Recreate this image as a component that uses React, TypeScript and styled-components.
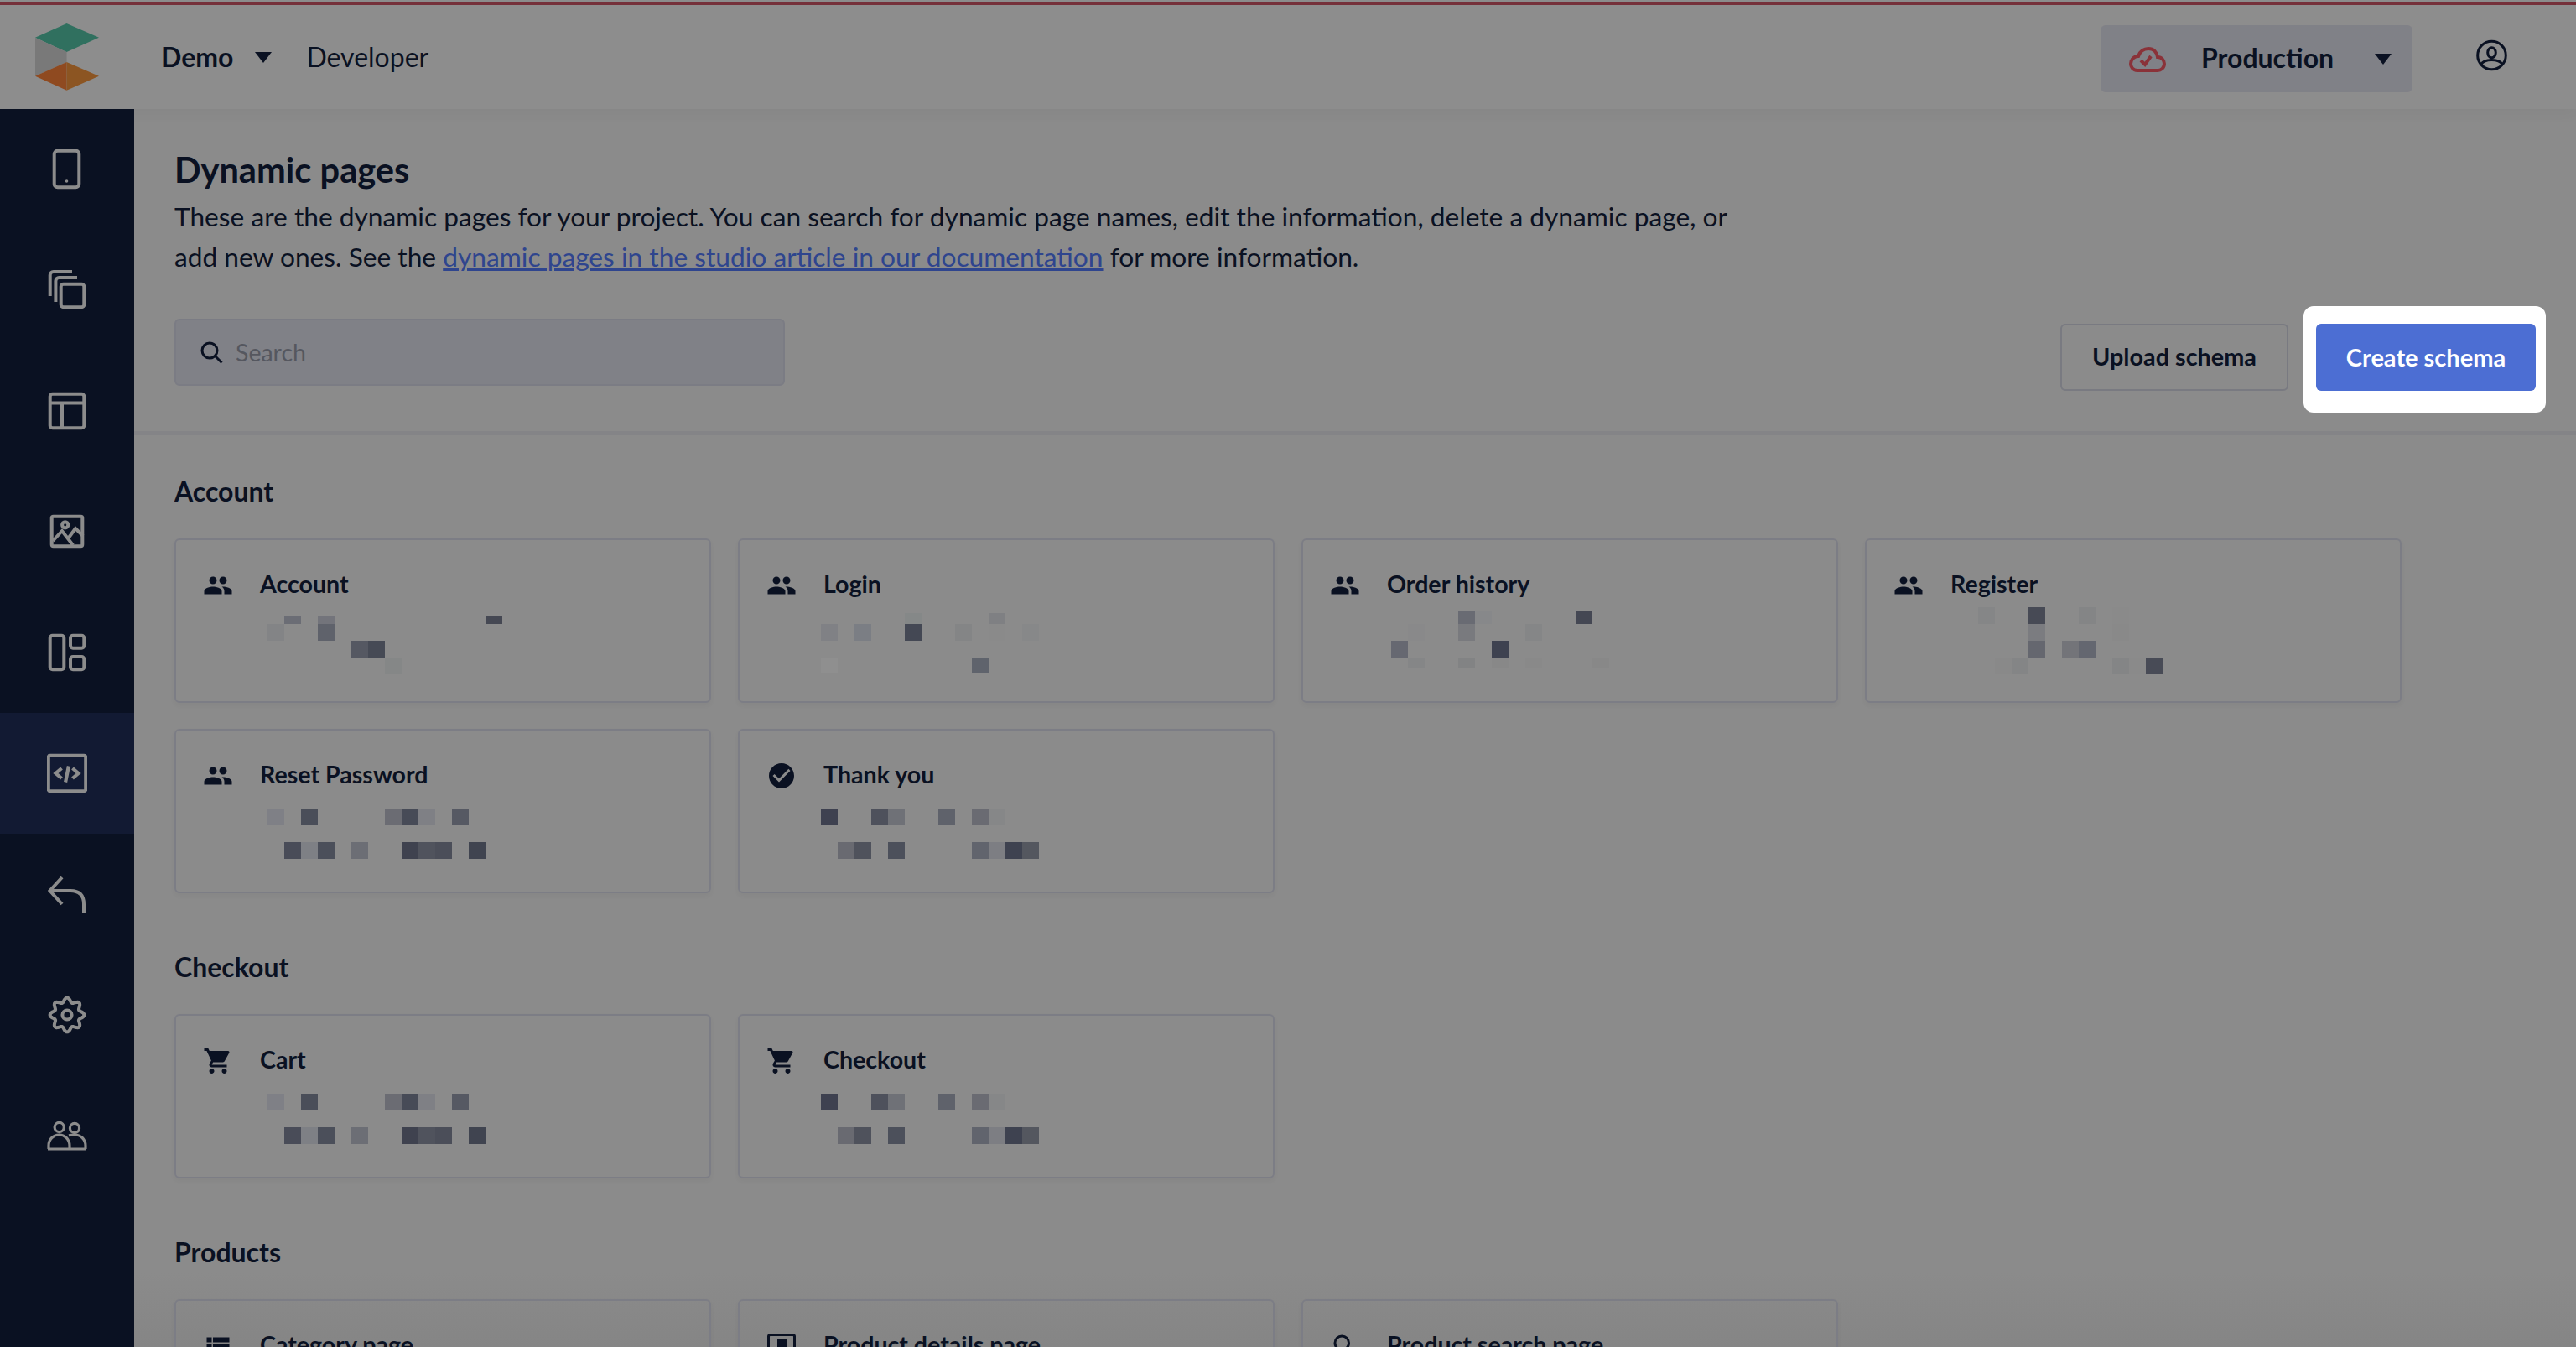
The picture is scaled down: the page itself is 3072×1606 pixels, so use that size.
import React from "react";
import styled, { createGlobalStyle } from "styled-components";
import { MdPeople, MdShoppingCart, MdCheckCircle, MdViewList, MdSearch } from "react-icons/md";

const INK = "#0a1122";
const ICON = "#8c8c8c";

const Global = createGlobalStyle`
  html, body { margin: 0; padding: 0; background: #8b8b8b; }
  * { box-sizing: border-box; }
  body { font-family: Lato, "Open Sans", sans-serif; color: ${INK}; }
`;

const Root = styled.div`
  width: 3072px;
  height: 1606px;
  overflow: hidden;
  display: flex;
  flex-direction: column;
`;
const TopBar = styled.header`
  position: relative;
  z-index: 1;
  flex: 0 0 130px;
  display: flex;
  align-items: center;
  background: linear-gradient(#8c8c8c 0 2px, #75303a 2px 6px, #8d8d8d 6px);
  box-shadow: 0 6px 16px rgba(0, 0, 0, 0.035);
  padding: 6px 82px 0 42px;
`;
const Logo = styled.svg`
  width: 76px;
  height: 80px;
  flex: none;
`;
const Project = styled.span`
  margin: -2px 0 0 74px;
  font-size: 32px;
  font-weight: 700;
`;
const Caret = styled.svg<{ $left: number }>`
  width: 20px;
  height: 13px;
  flex: none;
  margin-left: ${(p) => p.$left}px;
`;
const Role = styled.span`
  margin: -2px 0 0 41px;
  font-size: 32px;
`;
const EnvSelect = styled.div`
  margin: 4px 0 0 auto;
  width: 372px;
  height: 80px;
  border-radius: 6px;
  background: #808187;
  display: flex;
  align-items: center;
  padding-left: 34px;
`;
const EnvName = styled.span`
  margin: -3px 0 0 42px;
  font-size: 32px;
  font-weight: 700;
`;
const CloudIcon = styled.svg`
  width: 44px;
  height: 30px;
  flex: none;
  margin-top: 2px;
`;
const UserIcon = styled.svg`
  width: 37px;
  height: 38px;
  flex: none;
  margin: -5px 0 0 76px;
`;
const Body = styled.div`
  flex: 1;
  display: flex;
  min-height: 0;
`;
const Side = styled.nav`
  position: relative;
  z-index: 2;
  flex: 0 0 160px;
  background: #0a1122;
  display: flex;
  flex-direction: column;
`;
const SideItem = styled.div<{ $active?: boolean }>`
  height: 144px;
  display: flex;
  align-items: center;
  justify-content: center;
  background: ${(p) => (p.$active ? "#121a33" : "transparent")};
`;
const SideIcon = styled.svg`
  width: 48px;
  height: 48px;
  fill: none;
  stroke: ${ICON};
  stroke-width: 4;
`;
const Main = styled.main`
  flex: 1;
  min-width: 0;
  background: linear-gradient(#8b8b8b calc(100% - 90px), #858585);
`;
const Intro = styled.section`
  padding: 48px 48px 0 48px;
  height: 389px;
  border-bottom: 5px solid #848487;
`;
const Title = styled.h1`
  margin: 0;
  font-size: 41.6px;
  line-height: 48px;
  font-weight: 700;
`;
const Lead = styled.p`
  margin: 8px 0 0;
  width: 1870px;
  font-size: 31.7px;
  line-height: 48px;
`;
const DocLink = styled.a`
  color: #2f458e;
  text-decoration: underline;
`;
const Toolbar = styled.div`
  margin-top: 50px;
  display: flex;
  align-items: flex-start;
`;
const SearchBox = styled.div`
  width: 728px;
  height: 80px;
  border: 2px solid #7b7c84;
  border-radius: 6px;
  background: #808187;
  display: flex;
  align-items: center;
  padding: 0 0 0 29px;
  font-size: 28.5px;
  color: #55575f;
`;
const SearchGlyph = styled.svg`
  width: 27px;
  height: 27px;
  fill: none;
  stroke: ${INK};
  stroke-width: 3;
  margin-right: 15px;
  flex: none;
`;
const Actions = styled.div`
  margin: 6px 0 0 auto;
  display: flex;
  gap: 33px;
`;
const GhostButton = styled.div`
  width: 272px;
  height: 80px;
  border: 2px solid #797a81;
  border-radius: 6px;
  display: flex;
  align-items: center;
  justify-content: center;
  padding-bottom: 2px;
  font-size: 28.8px;
  font-weight: 700;
`;
const Spotlight = styled.div`
  position: relative;
  &::before {
    content: "";
    position: absolute;
    left: -15px;
    right: -12px;
    top: -21px;
    bottom: -26px;
    background: #fff;
    border-radius: 12px;
  }
`;
const PrimaryButton = styled.div`
  position: relative;
  width: 262px;
  height: 80px;
  border-radius: 6px;
  background: #4c6ed3;
  color: #fff;
  display: flex;
  align-items: center;
  justify-content: center;
  padding-bottom: 2px;
  font-size: 29px;
  font-weight: 700;
`;
const Section = styled.section`
  padding: 47px 0 0 48px;
  & + & {
    padding-top: 68px;
  }
`;
const SectionTitle = styled.h2`
  margin: 0 0 36px;
  font-size: 32px;
  line-height: 40px;
  font-weight: 700;
`;
const CardGrid = styled.div`
  display: grid;
  grid-template-columns: repeat(4, 640px);
  column-gap: 32px;
  row-gap: 31px;
`;
const Card = styled.article`
  height: 196px;
  border: 2px solid #7c7d85;
  border-radius: 6px;
  box-shadow: 0 3px 6px rgba(0, 0, 0, 0.04);
  padding: 32px 0 0 32px;
`;
const CardHead = styled.div`
  display: flex;
  align-items: center;
  height: 40px;
  font-size: 28.6px;
  font-weight: 700;
  svg {
    flex: none;
    margin: 4px 32px 0 0;
    color: ${INK};
  }
`;
const Mosaic = styled.svg`
  display: block;
  width: 360px;
  height: 100px;
  margin-left: 68px;
  overflow: visible;
`;

type Cell = [number, number, number, string];
const resetCells: Cell[] = [
  [0, 1, 1, "#7f8086"], [2, 1, 1, "#4a4e59"], [7, 1, 1, "#6b6c73"], [8, 1, 1, "#474b57"], [9, 1, 1, "#7f8085"], [11, 1, 1, "#565963"],
  [1, 3, 1, "#494c58"], [2, 3, 1, "#7e8085"], [3, 3, 1, "#4b4f5a"], [5, 3, 1, "#6c6e75"], [8, 3, 1, "#3f424f"], [9, 3, 1, "#50535d"], [10, 3, 1, "#4b4e59"], [12, 3, 1, "#404450"],
];
const thanksCells: Cell[] = [
  [0, 1, 1, "#3e4150"], [3, 1, 1, "#4e515c"], [4, 1, 1, "#6f7177"], [7, 1, 1, "#5f626b"], [9, 1, 1, "#6a6b72"], [10, 1, 1, "#868788"],
  [1, 3, 1, "#696a71"], [2, 3, 1, "#4f525c"], [4, 3, 1, "#4c505b"], [9, 3, 1, "#61646d"], [10, 3, 1, "#7d7e83"], [11, 3, 1, "#3e4250"], [12, 3, 1, "#54575f"],
];
const accountCells: Cell[] = [
  [1, 0.5, 0.5, "#6b6d75"], [3, 0.5, 0.5, "#73747b"], [3, 1, 1, "#5f626b"], [0, 1, 1, "#838486"], [13, 0.5, 0.5, "#454853"],
  [5, 2, 1, "#555862"], [6, 2, 1, "#464a55"], [7, 3, 1, "#858787"],
];
const loginCells: Cell[] = [
  [5, 0.35, 0.65, "#858888"], [10, 0.35, 0.65, "#7f8083"], [0, 1, 1, "#808185"], [2, 1, 1, "#7b7e84"], [5, 1, 1, "#444854"],
  [8, 1, 1, "#848586"], [10, 1, 1, "#8a8a8a"], [12, 1, 1, "#878889"], [0, 3, 0.95, "#8f8f8f"], [9, 3, 0.95, "#5f636c"],
];
const orderCells: Cell[] = [
  [4, 0.25, 0.75, "#696b73"], [5, 0.25, 0.75, "#87888a"], [11, 0.25, 0.75, "#444753"], [1, 1, 1, "#89898a"], [4, 1, 1, "#797a7e"],
  [8, 1, 1, "#858687"], [0, 2, 1, "#666871"], [6, 2, 1, "#3e4250"], [1, 3, 0.6, "#858687"], [4, 3, 0.6, "#828384"], [6, 3, 0.6, "#888888"],
  [8, 3, 0.6, "#898989"], [12, 3, 0.6, "#888888"],
];
const registerCells: Cell[] = [
  [2, 0, 1, "#858687"], [5, 0, 1, "#474a55"], [8, 0, 1, "#848586"], [10, 0, 1, "#8a8a8a"], [5, 1, 1, "#7b7c80"], [10, 1, 1, "#898989"],
  [5, 2, 1, "#65676f"], [7, 2, 1, "#737479"], [8, 2, 1, "#646770"], [3, 3, 1, "#898989"], [4, 3, 1, "#848586"], [10, 3, 1, "#848586"],
  [11, 3, 1, "#8a8a8a"], [12, 3, 1, "#484b56"],
];

function DetailsIcon() {
  return (
    <svg width="36" height="36" viewBox="0 0 36 36">
      <rect x="2.5" y="4.5" width="31" height="28" rx="2" fill="none" stroke={INK} strokeWidth="3" />
      <rect x="13" y="9" width="11" height="19" fill={INK} />
    </svg>
  );
}

type CardData = { name: string; icon: React.ReactNode; cells?: Cell[]; dx?: number; dy?: number };

function PageCard({ name, icon, cells = [], dx = 0, dy = 0 }: CardData) {
  return (
    <Card>
      <CardHead>
        {icon}
        <span>{name}</span>
      </CardHead>
      <Mosaic viewBox="0 0 360 100">
        {cells.map(([c, r, h, fill], i) => (
          <rect key={i} x={dx + c * 20} y={dy + r * 20} width="20" height={h * 20} fill={fill} />
        ))}
      </Mosaic>
    </Card>
  );
}

const people = <MdPeople size={36} />;
const cart = <MdShoppingCart size={36} />;
const check = <MdCheckCircle size={36} />;

const gearPath = (() => {
  const pts: string[] = [];
  for (let i = 0; i < 128; i++) {
    const t = (i / 128) * Math.PI * 2;
    const r = 17.8 + 2.6 * Math.cos(8 * t);
    pts.push(`${(24 + r * Math.sin(t)).toFixed(2)} ${(24 - r * Math.cos(t)).toFixed(2)}`);
  }
  return "M" + pts.join("L") + "Z";
})();

const sideIcons: React.ReactNode[] = [
  <><rect x="8.7" y="1.7" width="29.6" height="43.6" rx="4" /><circle cx="23.5" cy="38" r="1.8" fill={ICON} stroke="none" /></>,
  <><rect x="16.7" y="16.7" width="27.6" height="27.6" rx="3" /><path d="M3.7 31V6a4 4 0 0 1 4-4H30" /><path d="M10.4 38V13a4 4 0 0 1 4-4H36" /></>,
  <><rect x="3.7" y="3.7" width="40.6" height="40.6" rx="3" /><path d="M3.7 14.5H44.3M18 14.5V44" /></>,
  <><rect x="5.7" y="5.7" width="36.6" height="35.6" rx="2" /><circle cx="21.7" cy="15.8" r="3.6" /><path d="M7 35L18 23L31 40M26 31L34 20L43 29" /></>,
  <><rect x="3.7" y="3.7" width="16.6" height="40.6" rx="3" /><rect x="28" y="3.7" width="16.3" height="15" rx="3" /><rect x="28" y="29" width="16.3" height="15.3" rx="3" /></>,
  <><rect x="1.8" y="2.8" width="44.4" height="42.4" rx="2" /><path d="M17.5 18L10.5 24L17.5 30M30.5 18L37.5 24L30.5 30M25.9 15.5L22.1 34.5" strokeWidth="4.2" /></>,
  <path d="M18 4L3.5 20L18 36M3.5 20H28Q44 20 44 36V47" />,
  <><path d={gearPath} strokeLinejoin="round" /><circle cx="24" cy="24" r="5.6" /></>,
  <><circle cx="14.7" cy="14" r="5.6" strokeWidth="3.2" /><circle cx="33" cy="15" r="5.6" strokeWidth="3.2" /><path d="M1 40H47M2 40V36C2 28 8 23 14.5 23S27 28 27 36V40M26 23.8Q29.5 23 33 23C40 23 46 28 46 36V40" strokeWidth="3.2" /></>,
];

export default function App() {
  return (
    <Root>
      <Global />
      <TopBar>
        <Logo viewBox="0 0 76 80">
          <polygon points="37.5,0 76,16.7 37.5,34 0,16.7" fill="#30705f" />
          <polygon points="0,17 37.5,34 37.5,46 0,62.7" fill="#797979" />
          <polygon points="37.5,46 37.5,79.7 0,62.7" fill="#8f4a20" />
          <polygon points="37.5,46 76,62.7 37.5,79.7" fill="#8c5522" />
        </Logo>
        <Project>Demo</Project>
        <Caret $left={26} viewBox="0 0 20 13"><polygon points="0,0 20,0 10,13" fill={INK} /></Caret>
        <Role>Developer</Role>
        <EnvSelect>
          <CloudIcon viewBox="0 0 44 30" fill="none" stroke="#8a3239" strokeWidth="4">
            <path d="M10 28C4 28 2 23 2 20C2 15 6 11 11 11C13 5 18 2 23 2C29 2 33 6 34 12C39 12 42 16 42 20C42 25 38 28 34 28Z" />
            <path d="M14 16L19 21L26 11" />
          </CloudIcon>
          <EnvName>Production</EnvName>
          <Caret $left={49} viewBox="0 0 20 13"><polygon points="0,0 20,0 10,13" fill={INK} /></Caret>
        </EnvSelect>
        <UserIcon viewBox="0 0 37 38" fill="none" stroke={INK} strokeWidth="3">
          <circle cx="18.5" cy="19" r="16.8" />
          <ellipse cx="18.5" cy="15.7" rx="4.8" ry="6" />
          <path d="M6 30C8 25.5 12 24.5 18.5 24.5S29 25.5 31 30" />
        </UserIcon>
      </TopBar>
      <Body>
        <Side>
          {sideIcons.map((icon, i) => (
            <SideItem key={i} $active={i === 5}>
              <SideIcon viewBox="0 0 48 48">{icon}</SideIcon>
            </SideItem>
          ))}
        </Side>
        <Main>
          <Intro>
            <Title>Dynamic pages</Title>
            <Lead>
              These are the dynamic pages for your project. You can search for dynamic page names, edit the information, delete a dynamic page, or add new ones. See the{" "}
              <DocLink>dynamic pages in the studio article in our documentation</DocLink> for more information.
            </Lead>
            <Toolbar>
              <SearchBox>
                <SearchGlyph viewBox="0 0 27 27">
                  <circle cx="11" cy="11" r="9" />
                  <path d="M17.5 17.5L25.5 25.5" />
                </SearchGlyph>
                Search
              </SearchBox>
              <Actions>
                <GhostButton>Upload schema</GhostButton>
                <Spotlight>
                  <PrimaryButton>Create schema</PrimaryButton>
                </Spotlight>
              </Actions>
            </Toolbar>
          </Intro>
          <Section>
            <SectionTitle>Account</SectionTitle>
            <CardGrid>
              <PageCard name="Account" icon={people} cells={accountCells} dx={9} dy={8} />
              <PageCard name="Login" icon={people} cells={loginCells} dx={-3} dy={8} />
              <PageCard name="Order history" icon={people} cells={orderCells} dx={5} dy={8} />
              <PageCard name="Register" icon={people} cells={registerCells} dx={-7} dy={8} />
              <PageCard name="Reset Password" icon={people} cells={resetCells} dx={9} dy={1} />
              <PageCard name="Thank you" icon={check} cells={thanksCells} dx={-3} dy={1} />
            </CardGrid>
          </Section>
          <Section>
            <SectionTitle>Checkout</SectionTitle>
            <CardGrid>
              <PageCard name="Cart" icon={cart} cells={resetCells} dx={9} dy={1} />
              <PageCard name="Checkout" icon={cart} cells={thanksCells} dx={-3} dy={1} />
            </CardGrid>
          </Section>
          <Section>
            <SectionTitle>Products</SectionTitle>
            <CardGrid>
              <PageCard name="Category page" icon={<MdViewList size={36} />} />
              <PageCard name="Product details page" icon={<DetailsIcon />} />
              <PageCard name="Product search page" icon={<MdSearch size={36} />} />
            </CardGrid>
          </Section>
        </Main>
      </Body>
    </Root>
  );
}
